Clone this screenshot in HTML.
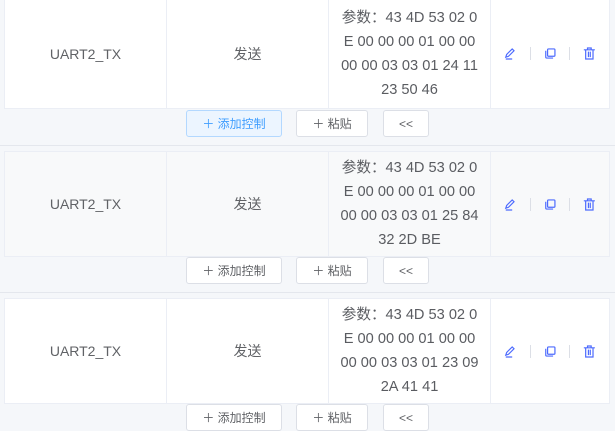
<!DOCTYPE html><html><head><meta charset="utf-8"><style>
body{margin:0;width:615px;height:409px;overflow:hidden;background:#f5f7fa;font-family:"Liberation Sans","Noto Sans CJK SC",sans-serif;color:#606266;font-size:14px;position:relative}
.sep{position:absolute;left:0;width:615px;height:1px;background:#e4e7ed}
.row{position:absolute;left:4px;width:606px;display:flex;border:1px solid #ebeef5;box-sizing:border-box}
.row div{display:flex;align-items:center;justify-content:center;text-align:center;border-right:1px solid #ebeef5;box-sizing:border-box;flex-shrink:0;overflow:hidden}
.c1,.c2,.c3{width:162px}.c4{flex:1!important;border-right:none!important}
.c3{line-height:24px;padding:0;font-size:14.6px;white-space:nowrap;color:#5a5c61}
.btn{position:absolute;height:27px;border:1px solid #dcdfe6;border-radius:3px;background:#fff;box-sizing:border-box;font-size:12px;display:flex;align-items:center;justify-content:center;color:#606266}
.btn.p{background:#ecf5ff;border-color:#b3d8ff;color:#409eff}
.ic{width:15px;height:15px;margin:0 12px}
.bar{width:1px;height:13px;background:#dcdfe6}
</style></head><body>
<div class="row" style="top:-2px;height:111px;background:#fff"><div class="c1">UART2_TX</div><div class="c2">发送</div><div class="c3">参数：43 4D 53 02 0<br>E 00 00 00 01 00 00<br>00 00 03 03 01 24 11<br>23 50 46</div><div class="c4">ICONS</div></div>
<div class="sep" style="top:145px"></div>
<div class="row" style="top:151px;height:106px;background:#f8f9fa"><div class="c1">UART2_TX</div><div class="c2">发送</div><div class="c3">参数：43 4D 53 02 0<br>E 00 00 00 01 00 00<br>00 00 03 03 01 25 84<br>32 2D BE</div><div class="c4">ICONS</div></div>
<div class="sep" style="top:292px"></div>
<div class="row" style="top:298px;height:106px;background:#fff"><div class="c1">UART2_TX</div><div class="c2">发送</div><div class="c3">参数：43 4D 53 02 0<br>E 00 00 00 01 00 00<br>00 00 03 03 01 23 09<br>2A 41 41</div><div class="c4">ICONS</div></div>
<div class="btn p" style="left:186px;top:110px;width:96px">＋ 添加控制</div><div class="btn" style="left:296px;top:110px;width:72px">＋ 粘贴</div><div class="btn" style="left:383px;top:110px;width:46px">&lt;&lt;</div>
<div class="btn" style="left:186px;top:257px;width:96px">＋ 添加控制</div><div class="btn" style="left:296px;top:257px;width:72px">＋ 粘贴</div><div class="btn" style="left:383px;top:257px;width:46px">&lt;&lt;</div>
<div class="btn" style="left:186px;top:404px;width:96px">＋ 添加控制</div><div class="btn" style="left:296px;top:404px;width:72px">＋ 粘贴</div><div class="btn" style="left:383px;top:404px;width:46px">&lt;&lt;</div>
<script>
var s='<svg class="ic" viewBox="0 0 16 16" fill="none" stroke="#4d6bfe" stroke-width="1.3"><path d="M3 12l1-3 6-6 2 2-6 6-3 1zM3 14h7"/></svg><span class="bar"></span><svg class="ic" viewBox="0 0 16 16" fill="none" stroke="#4d6bfe" stroke-width="1.3"><rect x="5" y="3" width="8" height="8" rx="1"/><path d="M3 5v7a1 1 0 0 0 1 1h7"/></svg><span class="bar"></span><svg class="ic" viewBox="0 0 16 16" fill="none" stroke="#4d6bfe" stroke-width="1.3"><path d="M2 4h12M6 4V2h4v2M4 4v10h8V4M7 6v6M9 6v6"/></svg>';
document.querySelectorAll('.c4').forEach(e=>e.innerHTML=s);
</script>
</body></html>
